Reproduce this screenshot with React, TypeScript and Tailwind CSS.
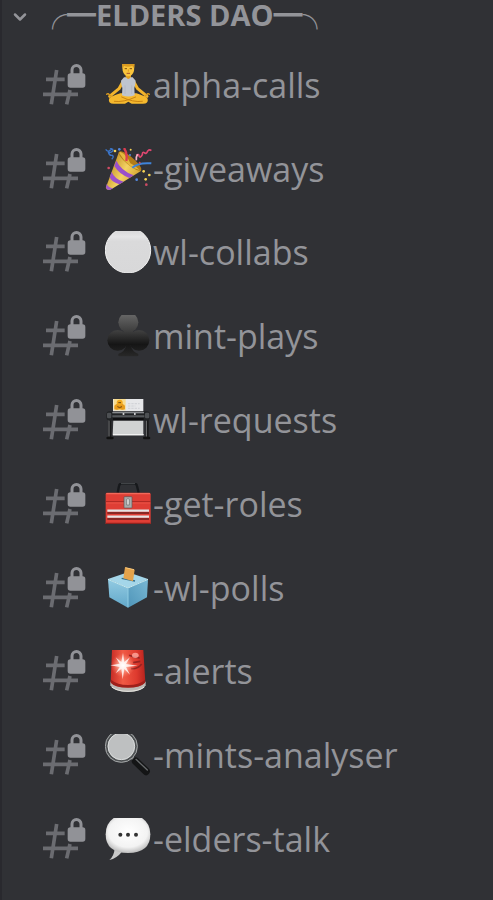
import React from 'react';
import { ChevronDown } from 'lucide-react';

interface Channel {
  name: string;
  icon: React.ReactNode;
}

const MeditateIcon = () => (
  <>
    <path d="M52 56 L42 74 L20 92 L14 97 M88 56 L98 74 L120 92 L126 97" fill="none" stroke="#f2b42c" strokeWidth="9" strokeLinecap="round" strokeLinejoin="round" />
    <path d="M5 91 q4 -4 8 1 l8 6 M133 91 q-4 -4 -8 1 l-8 6" fill="none" stroke="#d99a1f" strokeWidth="4" strokeLinecap="round" />
    <path d="M46 88 Q22 95 12 104 Q9 119 26 119 L60 119 L70 113 L80 119 L114 119 Q131 119 128 104 Q118 95 94 88 Z" fill="#f6b92e" />
    <path d="M28 112 Q55 116 92 99 M112 112 Q85 116 50 99" fill="none" stroke="#c98413" strokeWidth="3" strokeLinecap="round" />
    <rect x="62" y="28" width="16" height="18" fill="#e2a021" />
    <path d="M57 40 L63 40 Q70 50 77 40 L83 40 L92 50 Q92 60 88 72 L89 94 Q70 101 51 94 L52 72 Q48 60 48 50 Z" fill="#bfc5cf" />
    <path d="M60 64 V90 M80 64 V90" stroke="#adb4c1" strokeWidth="2" />
    <path d="M53 0 H87 Q89 10 87 20 Q83 36 70 37 Q57 36 53 20 Q51 10 53 0 Z" fill="#fac53c" />
    <path d="M51 0 H89 L87 13 L82 6 Q68 10 57 6 L53 14 Z" fill="#d99a20" />
    <path d="M59 14 h7 M74 14 h7" stroke="#80500c" strokeWidth="3" />
    <path d="M70 16 v7" stroke="#db9b22" strokeWidth="3" />
    <path d="M66 28 h8" stroke="#a9522b" strokeWidth="3" strokeLinecap="round" />
  </>
);

const PartyIcon = () => (
  <>
    <defs>
      <linearGradient id="cone" x1="0" y1="0.6" x2="0.7" y2="1">
        <stop offset="0" stopColor="#c9992c" />
        <stop offset="0.5" stopColor="#f3d264" />
        <stop offset="1" stopColor="#d3a632" />
      </linearGradient>
    </defs>
    <path d="M42 12 L109 68 L20 123 Q3 130 3 118 Z" fill="url(#cone)" />
    <path d="M34 38 Q48 68 86 82 L73 90 Q42 78 28 54 Z" fill="#9a50ca" />
    <path d="M20 72 Q29 94 56 101 L43 109 Q21 103 14 88 Z" fill="#9a50ca" />
    <path d="M5 108 q6 11 19 13 l-8 4 q-13 2 -13 -9 Z" fill="#a35bcb" />
    <ellipse cx="75" cy="39" rx="43" ry="12" transform="rotate(40 75 39)" fill="#b27c18" />
    <path d="M47 12 Q66 20 76 46 Q90 52 104 66 Q70 61 42 14 Z" fill="#e4b83f" />
    <path d="M64 39 Q68 15 57 0" fill="none" stroke="#dc3c50" strokeWidth="7" />
    <path d="M82 59 Q99 43 139 46" fill="none" stroke="#3f84d9" strokeWidth="6" />
    <path d="M2 4 q8 10 14 2 q6 -5 8 2 q-8 8 -14 4 q3 12 12 10 q6 4 -2 12 M15 0 l10 5" fill="none" stroke="#3b75c9" strokeWidth="4" />
    <path d="M94 22 q8 -6 8 2 q4 8 10 -4 q0 -10 6 -6 q6 6 10 -5 q6 -6 11 -1" fill="none" stroke="#df4770" strokeWidth="5" />
    <path d="M94 37 q-2 -10 4 -18" fill="none" stroke="#f5b6c7" strokeWidth="5" />
    <g fill="#f5d356">
      <circle cx="30" cy="9" r="4" /><circle cx="116" cy="70" r="4" /><circle cx="133" cy="81" r="4" /><circle cx="122" cy="94" r="4" /><circle cx="77" cy="5" r="3" />
    </g>
    <g fill="#5387dd">
      <circle cx="43" cy="4" r="4" /><circle cx="95" cy="95" r="4" /><circle cx="75" cy="21" r="3" />
    </g>
    <g fill="#cf4b65">
      <circle cx="11" cy="60" r="4" /><circle cx="124" cy="110" r="4" /><circle cx="104" cy="44" r="3" />
    </g>
  </>
);

const CircleIcon = () => (
  <>
    <defs>
      <linearGradient id="disc" x1="0" y1="0" x2="0" y2="1">
        <stop offset="0" stopColor="#d2d2d3" />
        <stop offset="0.2" stopColor="#e5e5e6" />
        <stop offset="0.3" stopColor="#dadadb" />
        <stop offset="1" stopColor="#d8d8d9" />
      </linearGradient>
    </defs>
    <circle cx="69" cy="58" r="68" fill="url(#disc)" stroke="#f1f1f1" strokeWidth="3" />
  </>
);

const ClubIcon = () => (
  <>
    <defs>
      <linearGradient id="club" x1="0" y1="0" x2="0" y2="126" gradientUnits="userSpaceOnUse">
        <stop offset="0" stopColor="#656565" />
        <stop offset="0.4" stopColor="#3c3c3c" />
        <stop offset="0.7" stopColor="#151515" />
        <stop offset="1" stopColor="#292929" />
      </linearGradient>
    </defs>
    <g fill="url(#club)">
      <circle cx="70" cy="22" r="30" />
      <circle cx="38" cy="76" r="31" />
      <circle cx="102" cy="76" r="31" />
      <path d="M55 43 H85 L82 65 L76 89 Q82 111 99 116 Q103 122 96 124 H44 Q37 122 41 116 Q59 111 64 89 L58 65 Z" />
    </g>
  </>
);

const PrinterIcon = () => (
  <>
    <rect x="24" y="0" width="91" height="44" fill="#e6e7e9" />
    <rect x="26" y="0" width="36" height="34" fill="#f8dc8f" />
    <path d="M44 3 L56 20 L60 31 H28 L32 20 Z" fill="#d68b19" />
    <circle cx="44" cy="11" r="9" fill="#f2a91e" />
    <circle cx="36" cy="24" r="8" fill="#e79b1b" />
    <circle cx="52" cy="24" r="8" fill="#e79b1b" />
    <path d="M40 11 h8 M37 23 q7 5 14 0" fill="none" stroke="#704510" strokeWidth="3" />
    <path d="M69 14 h35 M69 21 h22 M69 28 h35" stroke="#c3c6ca" strokeWidth="2" strokeDasharray="7 3" />
    <path d="M14 56 V119 M126 56 V119" stroke="#18191a" strokeWidth="10" />
    <path d="M12 62 V113 M124 62 V113" stroke="#77797b" strokeWidth="3" />
    <path d="M8 117 h14 M118 117 h14" stroke="#111" strokeWidth="8" strokeLinecap="round" />
    <path d="M25 63 H115 V109 H23 Z" fill="#d0d2d2" />
    <path d="M24 107 H116" stroke="#f1f1f1" strokeWidth="4" />
    <rect x="4" y="37" width="131" height="28" rx="10" fill="#202224" />
    <path d="M22 41 H117" stroke="#85888b" strokeWidth="4" />
    <path d="M22 52 H118" stroke="#54575a" strokeWidth="6" />
    <path d="M24 60 H116" stroke="#0b0c0d" strokeWidth="5" />
    <path d="M53 45 h5 M87 45 h5" stroke="#fff" strokeWidth="4" />
    <rect x="6" y="41" width="13" height="17" rx="4" fill="#4d5053" />
    <rect x="120" y="41" width="13" height="17" rx="4" fill="#4d5053" />
  </>
);

const ToolboxIcon = () => (
  <>
    <path d="M38 29 L42 9 Q43 2 51 2 H87 Q95 2 96 9 L101 29" fill="none" stroke="#17191c" strokeWidth="7" />
    <path d="M48 2 H90" stroke="#4a4c50" strokeWidth="3" />
    <path d="M5 29 H133 Q137 29 137 34 V123 H2 V34 Q2 29 5 29 Z" fill="#df3e35" />
    <path d="M4 32 H135" stroke="#f2695a" strokeWidth="4" />
    <path d="M2 56 H137" stroke="#a92822" strokeWidth="3" />
    <path d="M3 60 H136" stroke="#ec5448" strokeWidth="3" />
    <path d="M7 90 H132 M7 108 H132" stroke="#6d2320" strokeWidth="5" />
    <path d="M7 83 H132 M7 101 H132" stroke="#e3e4e5" strokeWidth="7" />
    <rect x="57" y="41" width="24" height="34" rx="2" fill="#a9abab" stroke="#5d5554" strokeWidth="2" />
    <path d="M65 49 q4 -5 8 0 v17 h-8 Z" fill="#d9dada" stroke="#696969" strokeWidth="2" />
    <path d="M2 121 H137" stroke="#91221e" strokeWidth="4" />
  </>
);

const BallotIcon = () => (
  <>
    <defs>
      <linearGradient id="boxLeft" x1="0" y1="0" x2="0" y2="1">
        <stop offset="0" stopColor="#93cbe2" />
        <stop offset="1" stopColor="#62a8ca" />
      </linearGradient>
      <linearGradient id="boxRight" x1="0" y1="1" x2="1" y2="0">
        <stop offset="0" stopColor="#4f95b9" />
        <stop offset="1" stopColor="#79b8d4" />
      </linearGradient>
    </defs>
    <path d="M9 37 L69 64 V122 L13 91 Z" fill="url(#boxLeft)" />
    <path d="M129 37 L69 64 V122 L126 91 Z" fill="url(#boxRight)" />
    <path d="M9 36 L62 18 Q69 15 76 18 L129 36 L69 63 Z" fill="#a4d6e9" />
    <path d="M9 37 L69 63 L129 37" fill="none" stroke="#c3ebf4" strokeWidth="3" />
    <path d="M69 64 V121" stroke="#91cde3" strokeWidth="3" />
    <path d="M50 34 L90 42" stroke="#326d8a" strokeWidth="4" />
    <path d="M60 1 L89 8 L84 43 L55 34 Z" fill="#e4a34b" />
    <path d="M61 2 L87 8" stroke="#f8c87c" strokeWidth="3" />
  </>
);

const SirenIcon = () => (
  <>
    <defs>
      <linearGradient id="siren" x1="0" y1="0" x2="1" y2="0">
        <stop offset="0" stopColor="#c72c25" />
        <stop offset="0.35" stopColor="#f05a45" />
        <stop offset="0.75" stopColor="#de3a2e" />
        <stop offset="1" stopColor="#b5231e" />
      </linearGradient>
      <radialGradient id="flare">
        <stop offset="0" stopColor="#fff" />
        <stop offset="0.35" stopColor="#ffc0ae" stopOpacity="0.8" />
        <stop offset="1" stopColor="#ff8067" stopOpacity="0" />
      </radialGradient>
    </defs>
    <path d="M16 95 H122 V106 Q112 126 69 126 Q27 126 16 106 Z" fill="#bbb9b5" />
    <path d="M20 111 Q38 124 69 124 Q100 124 118 111" fill="none" stroke="#e5e4df" strokeWidth="3" />
    <path d="M21 0 H115 L121 96 Q112 112 69 112 Q26 112 17 96 Z" fill="url(#siren)" />
    <path d="M18 89 Q37 105 69 105 Q103 105 120 89 V98 Q106 113 69 113 Q30 113 17 98 Z" fill="#9e201b" />
    <path d="M72 16 Q88 22 104 24 M78 56 Q98 58 110 42 M84 38 l22 -4" fill="none" stroke="#952421" strokeWidth="5" />
    <ellipse cx="91" cy="16" rx="10" ry="8" fill="#ffaaa0" opacity="0.8" />
    <circle cx="54" cy="46" r="36" fill="url(#flare)" />
    <path d="M54 8 L58 36 L75 22 L63 42 L98 47 L63 51 L75 74 L58 57 L53 88 L49 57 L32 70 L44 51 L16 46 L44 41 L32 22 L49 36 Z" fill="#fff" opacity="0.8" />
  </>
);

const MagnifierIcon = () => (
  <>
    <path d="M80 70 L94 84" stroke="#a5a7a8" strokeWidth="9" />
    <path d="M92 82 L123 112" stroke="#141516" strokeWidth="23" strokeLinecap="round" />
    <path d="M93 76 L127 108" stroke="#676a6c" strokeWidth="4" strokeLinecap="round" />
    <circle cx="49" cy="37" r="45" fill="#bec0c1" stroke="#4e5153" strokeWidth="9" />
    <circle cx="49" cy="37" r="48" fill="none" stroke="#a3a6a7" strokeWidth="3" />
    <circle cx="49" cy="37" r="40" fill="none" stroke="#dadcdc" strokeWidth="3" />
  </>
);

const SpeechIcon = () => (
  <>
    <defs>
      <radialGradient id="bubble" cx="0.5" cy="0.4" r="0.62">
        <stop offset="0" stopColor="#fff" />
        <stop offset="0.7" stopColor="#f3f3f3" />
        <stop offset="1" stopColor="#b8b8b8" />
      </radialGradient>
    </defs>
    <path d="M29 89 Q28 113 13 126 Q35 121 51 101 Z" fill="#c9c9c9" />
    <path d="M26 0 H111 Q136 17 136 49 Q136 105 69 105 Q2 105 2 49 Q2 17 26 0 Z" fill="url(#bubble)" />
    <g fill="#333">
      <circle cx="46" cy="50" r="6" /><circle cx="69" cy="50" r="6" /><circle cx="93" cy="50" r="6" />
    </g>
  </>
);

const channels: Channel[] = [
  { name: 'alpha-calls', icon: <MeditateIcon /> },
  { name: '-giveaways', icon: <PartyIcon /> },
  { name: 'wl-collabs', icon: <CircleIcon /> },
  { name: 'mint-plays', icon: <ClubIcon /> },
  { name: 'wl-requests', icon: <PrinterIcon /> },
  { name: '-get-roles', icon: <ToolboxIcon /> },
  { name: '-wl-polls', icon: <BallotIcon /> },
  { name: '-alerts', icon: <SirenIcon /> },
  { name: '-mints-analyser', icon: <MagnifierIcon /> },
  { name: '-elders-talk', icon: <SpeechIcon /> },
];

const LockedHash = () => (
  <svg viewBox="0 0 132 126" className="w-11 shrink-0" aria-hidden="true">
    <path d="M44 18 L28 121 M12 46 H68 M3 91 H108 M84 78 L74 121" fill="none" stroke="#6b6c71" strokeWidth="11" />
    <path d="M90 32 V18 a13 13 0 0 1 27 0 V32" fill="none" stroke="#919297" strokeWidth="9" />
    <rect x="77" y="28" width="53" height="43" rx="8" fill="#919297" />
  </svg>
);

const ChannelRow: React.FC<{ channel: Channel }> = ({ channel }) => (
  <li className="flex-1 flex">
    <a href="#" className="flex-1 flex items-center pl-10">
      <LockedHash />
      <svg viewBox="0 0 144 126" className="w-12 shrink-0 ml-[19px]" aria-hidden="true">
        {channel.icon}
      </svg>
      <span className="text-[34px] leading-10 whitespace-nowrap">{channel.name}</span>
    </a>
  </li>
);

export default function App() {
  return (
    <nav className="min-h-screen flex flex-col bg-[#303135] text-[#939499] border-l-2 border-[#29292e] pb-[19px] font-['Open_Sans','Noto_Sans_CJK_JP',sans-serif]">
      <button className="h-[43px] shrink-0 flex items-start pl-2 text-left">
        <ChevronDown className="w-5 h-5 mt-[7px]" strokeWidth={3} />
        <span className="ml-2 text-[29px] leading-[30px] font-bold whitespace-nowrap">╭━ELDERS DAO━╮</span>
      </button>
      <ul className="flex-1 flex flex-col">
        {channels.map((channel) => (
          <ChannelRow key={channel.name} channel={channel} />
        ))}
      </ul>
    </nav>
  );
}
